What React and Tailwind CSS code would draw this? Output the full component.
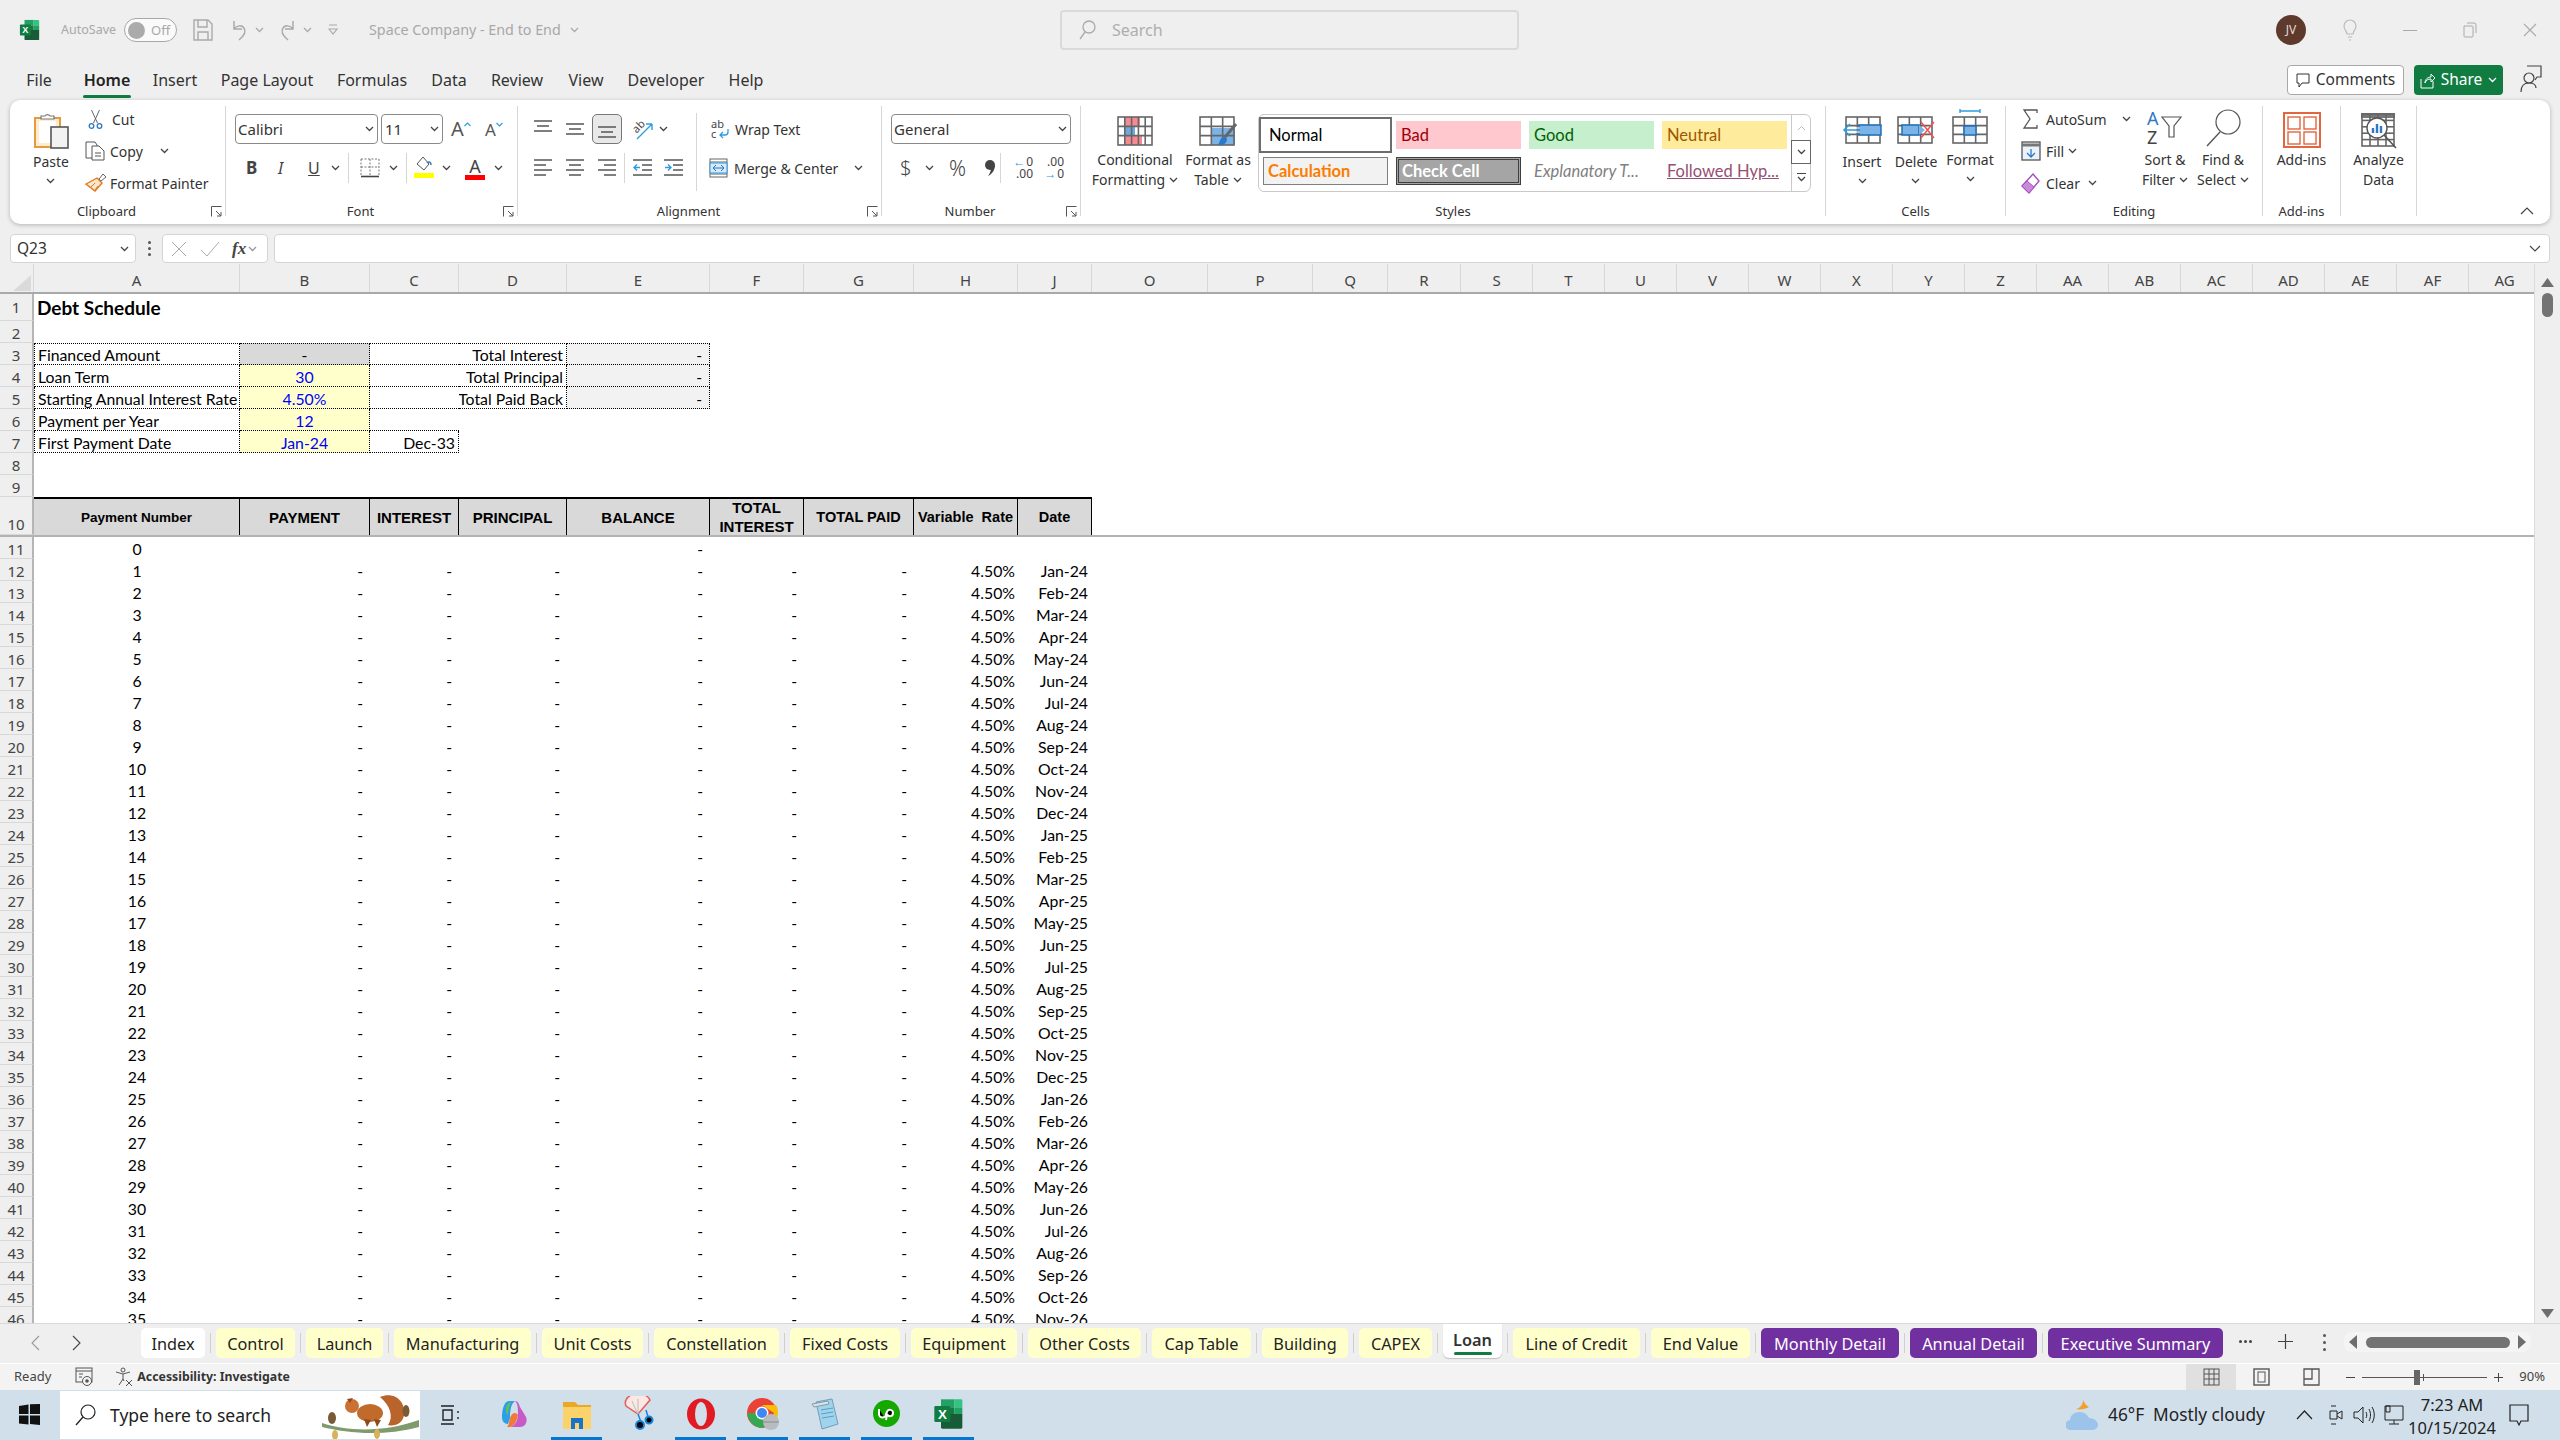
import React from 'react';

const ui = 'font-["Noto_Sans",sans-serif]';
const cellFont = 'font-["Lato",sans-serif]';

const I = ({ w, h, className = '', children }) => (
  <svg width={w} height={h} viewBox={`0 0 ${w} ${h}`} fill="none" className={`shrink-0 overflow-visible ${className}`}>{children}</svg>
);

const Chev = ({ className = '', color = '#444' }) => (
  <I w={9} h={6} className={className}><path d="M1 1l3.5 3.5L8 1" stroke={color} strokeWidth="1.3" /></I>
);

const Sep = ({ className = 'h-[110px] mt-[6px]' }) => <div className={`w-px bg-[#d6d6d6] shrink-0 ${className}`} />;

const Launcher = () => (
  <I w={11} h={11}><path d="M.5 10.5V.5h10M5 5l5 5M10 6v4H6" stroke="#555" /></I>
);

// ribbon group: tool area on top, caption below
const Group = ({ className, label, launcher, children }) => (
  <div className={`flex flex-col shrink-0 mt-[4px] ${className}`}>
    <div className="flex h-[97px]">{children}</div>
    <div className="flex items-center h-[20px]">
      <div className="flex-1 text-center text-[13px] leading-[20px] text-[#333]">{label}</div>
      {launcher && <div className="w-[22px] pl-[8px] pt-[1px] flex justify-start"><Launcher /></div>}
    </div>
  </div>
);

const Big = ({ className, icon, lines, chev, tight }) => (
  <div className={`flex flex-col items-center shrink-0 ${className}`}>
    <div className="h-[46px] flex items-center justify-center">{icon}</div>
    <div className={`text-[14px] leading-[20px] text-[#333] text-center whitespace-nowrap ${tight ? '' : 'mt-[2px]'}`}>
      {lines.map((l, i) => (
        <div key={l} className="flex items-center justify-center gap-[4px]">
          {l}
          {chev === 'inline' && i === lines.length - 1 && <Chev />}
        </div>
      ))}
      {chev === 'below' && <div className="flex justify-center h-[18px] items-center"><Chev /></div>}
    </div>
  </div>
);

const Small = ({ icon, label, after, className = '' }) => (
  <div className={`flex items-center h-[32px] text-[14px] text-[#333] whitespace-nowrap ${className}`}>
    {icon}
    {label}
    {after}
  </div>
);

const SheetGrid = ({ x = 0, y = 0, w = 36, h = 28, c = 3, r = 3 }) => (
  <g stroke="#666" strokeWidth="1.6">
    <rect x={x + 1} y={y + 1} width={w - 2} height={h - 2} />
    {Array.from({ length: c - 1 }, (_, i) => (
      <path key={i} d={`M${x + 1 + ((w - 2) * (i + 1)) / c} ${y + 1}v${h - 2}`} />
    ))}
    {Array.from({ length: r - 1 }, (_, i) => (
      <path key={i} d={`M${x + 1} ${y + 1 + ((h - 2) * (i + 1)) / r}h${w - 2}`} />
    ))}
  </g>
);

const ExcelLogo = ({ s = 22 }) => (
  <svg width={s} height={s} viewBox="0 0 24 24" className="shrink-0">
    <path fill="#21a366" d="M6 1h10v6H6z" />
    <path fill="#33c481" d="M16 1h5a1 1 0 0 1 1 1v5h-6z" />
    <path fill="#107c41" d="M6 7h10v5H6z" />
    <path fill="#21a366" d="M16 7h6v5h-6z" />
    <path fill="#185c37" d="M6 12h16v10a1 1 0 0 1-1 1H7a1 1 0 0 1-1-1z" />
    <rect x="1" y="6" width="12" height="12" rx="1" fill="#107c41" />
    <text x="7" y="15.5" textAnchor="middle" fontSize="10" fontWeight="700" fill="#fff" fontFamily="Liberation Sans">X</text>
  </svg>
);

function TitleBar() {
  return (
    <div className={`flex items-center h-[66px] pb-[6px] shrink-0 text-[#a8a8a8] ${ui}`}>
      <div className="w-[1060px] shrink-0 flex items-center">
        <div className="ml-[19px]"><ExcelLogo /></div>
        <span className="ml-[20px] w-[54px] text-[12.5px] whitespace-nowrap">AutoSave</span>
        <div className="ml-[9px] w-[53px] h-[24px] rounded-full border border-[#a8a8a8] bg-[#fafafa] flex items-center px-[3px] gap-[6px]">
          <div className="w-[17px] h-[17px] rounded-full bg-[#ababab]" />
          <span className="text-[13px] leading-none">Off</span>
        </div>
        <I w={20} h={22} className="ml-[16px]"><path d="M1 1h14l4 4v16H1zM5 1v7h9V1M5 21v-8h10v8" stroke="#aaa" strokeWidth="1.4" /></I>
        <I w={20} h={22} className="ml-[16px]"><path d="M5 2v8h8M5 10c3-4 8-4 10-1s1 7-5 12" stroke="#aaa" strokeWidth="1.5" /></I>
        <Chev className="ml-[6px]" color="#aaa" />
        <I w={20} h={22} className="ml-[14px]"><path d="M15 2v8H7M15 10c-3-4-8-4-10-1s-1 7 5 12" stroke="#aaa" strokeWidth="1.5" /></I>
        <Chev className="ml-[5px]" color="#aaa" />
        <I w={10} h={12} className="ml-[16px]"><path d="M1 1h8M1 5l4 5 4-5z" stroke="#aaa" strokeWidth="1.2" /></I>
        <span className="ml-[31px] w-[193px] text-[14.3px] whitespace-nowrap">Space Company - End to End</span>
        <Chev className="ml-[8px]" color="#aaa" />
      </div>
      <div className="shrink-0 w-[459px] h-[40px] rounded-[4px] border-2 border-[#dadada] flex items-center pl-[16px] gap-[16px]">
        <I w={18} h={20}><circle cx="11" cy="7" r="6" stroke="#aaa" strokeWidth="1.3" /><path d="M7 12l-5 7" stroke="#aaa" strokeWidth="1.3" /></I>
        <span className="text-[16px] text-[#aeaeae]">Search</span>
      </div>
      <div className="ml-[757px] shrink-0 w-[30px] h-[30px] rounded-full bg-[#5e3a2c] flex items-center justify-center text-[12px] text-[#e6dcd6]">JV</div>
      <I w={14} h={22} className="ml-[37px]"><path d="M4 15c0-3-3-4-3-8a6 6 0 0 1 12 0c0 4-3 5-3 8zM5 18h4M6 21h2" stroke="#bbb" strokeWidth="1.2" /></I>
      <div className="ml-[46px] shrink-0 w-[14px] h-px bg-[#aaa]" />
      <I w={14} h={16} className="ml-[46px]"><path d="M1 4h8a1 1 0 0 1 1 1v9a1 1 0 0 1-1 1H2a1 1 0 0 1-1-1zM4 1h7a2 2 0 0 1 2 2v8" stroke="#aaa" /></I>
      <I w={14} h={14} className="ml-[46px]"><path d="M1 1l12 12M13 1L1 13" stroke="#aaa" strokeWidth="1.1" /></I>
    </div>
  );
}

const TABS = [
  ['File', 'w-[66px]'], ['Home', 'w-[70px]'], ['Insert', 'w-[66px]'], ['Page Layout', 'w-[118px]'], ['Formulas', 'w-[92px]'],
  ['Data', 'w-[62px]'], ['Review', 'w-[74px]'], ['View', 'w-[64px]'], ['Developer', 'w-[96px]'], ['Help', 'w-[64px]'],
];

function MenuRow() {
  return (
    <div className={`flex h-[34px] shrink-0 text-[16px] text-[#333] ${ui}`}>
      <div className="flex pl-[6px] mt-[-1px]">
        {TABS.map(([t, w]) => (
          <div key={t} className={`${w} flex flex-col items-center`}>
            <div className={`h-[30px] leading-[30px] whitespace-nowrap ${t === 'Home' ? 'font-semibold text-[#222]' : ''}`}>{t}</div>
            {t === 'Home' && <div className="w-[48px] h-[3px] bg-[#107c41] rounded-full" />}
          </div>
        ))}
      </div>
      <div className="ml-auto flex items-start mt-[-1px]">
        <div className="w-[117px] h-[30px] rounded-[4px] border border-[#a8a8a8] bg-white flex items-center justify-center gap-[6px] text-[15.5px]">
          <I w={14} h={15}><path d="M1 1h12v9H6l-3 4v-4H1z" stroke="#333" /></I>
          Comments
        </div>
        <div className="ml-[10px] w-[89px] h-[30px] rounded-[4px] bg-[#107c41] flex items-center justify-center gap-[6px] text-white text-[15.5px]">
          <I w={15} h={17}><path d="M1 7v9h12V9M5 11c0-4 3-6 6-6V2l4 4-4 4V7c-3 0-5 1-6 4z" stroke="#fff" /></I>
          Share
          <Chev color="#fff" />
        </div>
        <I w={22} h={28} className="ml-[17px] mr-[18px]">
          <circle cx="9" cy="13" r="5" stroke="#444" strokeWidth="1.2" />
          <path d="M1 27c0-6 3-9 8-9s7 2 7 5M7 1h14v11h-4l-2 3" stroke="#444" strokeWidth="1.2" />
        </I>
      </div>
    </div>
  );
}

function AlignIcon({ kind }) {
  const d = {
    top: 'M0 1h18M3 6h12M0 11h18',
    mid: 'M0 4h18M3 9h12M0 14h18',
    bottom: 'M0 7h18M3 12h12M0 17h18',
    left: 'M0 1h18M0 6h12M0 11h18M0 16h12',
    center: 'M0 1h18M3 6h12M0 11h18M3 16h12',
    right: 'M0 1h18M6 6h12M0 11h18M6 16h12',
  }[kind];
  return <I w={18} h={18}><path d={d} stroke="#555" strokeWidth="1.4" /></I>;
}

function Ribbon() {
  return (
    <div className={`flex h-[124px] mx-[10px] shrink-0 rounded-[10px] bg-white shadow-[0_1px_4px_rgba(0,0,0,0.25)] ${ui}`}>
      <Group className="w-[215px]" label="Clipboard" launcher>
        <div className="ml-[10px] w-[62px]">
          <Big className="w-full" chev="below" lines={['Paste']} icon={
            <I w={36} h={38} className="mt-[6px]">
              <rect x="2" y="7" width="25" height="29" fill="#fdeccf" stroke="#e59a3f" strokeWidth="2" />
              <rect x="6" y="10" width="17" height="22" fill="#fff" />
              <path d="M8 8V5h4a3 3 0 0 1 5 0h4v3z" fill="#fff" stroke="#777" strokeWidth="1.2" />
              <rect x="18" y="16" width="17" height="21" fill="#f2f2f2" stroke="#555" strokeWidth="1.6" />
            </I>} />
        </div>
        <div className="ml-[3px] flex flex-col mt-[-1px]">
          <Small label="Cut" className="gap-[9px] pl-[3px]" icon={
            <I w={15} h={20}>
              <path d="M3.500 1l6 13M11.500 1l-6 13" stroke="#666" />
              <circle cx="3.500" cy="17" r="2.300" stroke="#2f78c4" strokeWidth="1.3" />
              <circle cx="11.500" cy="17" r="2.300" stroke="#2f78c4" strokeWidth="1.3" />
            </I>} />
          <Small label="Copy" className="gap-[5px]" after={<Chev className="ml-[12px]" />} icon={
            <I w={20} h={20}>
              <path d="M1 1h9l2 3v13H1z" fill="#fff" stroke="#555" />
              <path d="M7 5h7l5 5v9H7z" fill="#fff" stroke="#555" />
              <path d="M10 12h6M10 15h6" stroke="#555" />
            </I>} />
          <Small label="Format Painter" className="gap-[3px]" icon={
            <I w={22} h={20}>
              <path d="M14 6l4-5 3 3-5 4z" stroke="#666" />
              <path d="M12 5l5 5-7 8L1 11z" fill="#fbe6cd" stroke="#e07b1a" strokeWidth="1.4" />
              <path d="M6 14l4-4M10 17l3-4" stroke="#e07b1a" />
            </I>} />
        </div>
      </Group>
      <Sep />
      <Group className="w-[291px]" label="Font" launcher>
        <div className="flex flex-col">
          <div className="flex items-center h-[40px] pt-[10px] ml-[9px]">
            <div className="w-[143px] h-[30px] rounded-[4px] border border-[#8a8a8a] flex items-center pl-[2px] pr-[3px] text-[15px] text-[#333] justify-between">
              Calibri<Chev />
            </div>
            <div className="ml-[3px] w-[62px] h-[30px] rounded-[4px] border border-[#8a8a8a] flex items-center pl-[3px] pr-[3px] text-[15px] text-[#333] justify-between">
              11<Chev />
            </div>
            <div className="ml-[8px] w-[20px] text-[20px] leading-none text-[#555] flex items-start">A
              <I w={7} h={5} className="mt-[3px]"><path d="M.5 4L3.500 1l3 3" stroke="#2f9be0" strokeWidth="1.2" /></I>
            </div>
            <div className="ml-[14px] w-[18px] text-[17px] leading-none text-[#555] flex items-start">A
              <I w={7} h={5} className="mt-[1px]"><path d="M.5 1l3 3 3-3" stroke="#2f9be0" strokeWidth="1.2" /></I>
            </div>
          </div>
          <div className="flex items-center h-[36px] mt-[6px] ml-[20px] text-[#444]">
            <span className="w-[12px] text-[17px] font-bold">B</span>
            <span className="ml-[20px] w-[10px] text-[16px] italic">I</span>
            <span className="ml-[20px] w-[12px] text-[16px] underline">U</span>
            <Chev className="ml-[11px]" />
            <Sep className="h-[30px] ml-[8px]" />
            <I w={20} h={20} className="ml-[11px]">
              <path d="M1 1h18M1 1v16M19 1v16M10 1v16M1 9h18" stroke="#777" strokeDasharray="2 1.500" />
              <path d="M1 18.500h18" stroke="#444" strokeWidth="1.600" />
            </I>
            <Chev className="ml-[9px]" />
            <Sep className="h-[30px] ml-[8px]" />
            <I w={20} h={24} className="ml-[7px]">
              <path d="M9 1l6 7-5 6-7-6z" fill="#fff" stroke="#555" />
              <path d="M13 7c2-2 4-1 4 2" stroke="#2f78c4" strokeWidth="1.500" />
              <rect x="0" y="17" width="20" height="5" fill="#ffff00" />
            </I>
            <Chev className="ml-[8px]" />
            <div className="ml-[14px] w-[20px] flex flex-col items-center">
              <span className="text-[18px] leading-[18px] text-[#444]">A</span>
              <div className="w-[20px] h-[5px] bg-[#ff0000]" />
            </div>
            <Chev className="ml-[9px]" />
          </div>
        </div>
      </Group>
      <Sep />
      <Group className="w-[363px]" label="Alignment" launcher>
        <div className="flex flex-col ml-[16px]">
          <div className="flex items-center h-[40px] pt-[10px]">
            <AlignIcon kind="top" />
            <div className="ml-[14px]"><AlignIcon kind="mid" /></div>
            <div className="ml-[8px] w-[30px] h-[30px] rounded-[5px] border border-[#777] bg-[#e8e8e8] flex items-center justify-center"><AlignIcon kind="bottom" /></div>
            <I w={22} h={24} className="ml-[9px]">
              <text x="2" y="14" fontSize="11" fill="#444" transform="rotate(-45 7 11)" fontFamily="Noto Sans">ab</text>
              <path d="M6 22L21 7m0 0h-6m6 0v6" stroke="#2f9be0" strokeWidth="1.400" />
            </I>
            <Chev className="ml-[6px]" />
          </div>
          <div className="flex items-center h-[36px] mt-[6px]">
            <AlignIcon kind="left" />
            <div className="ml-[14px]"><AlignIcon kind="center" /></div>
            <div className="ml-[14px]"><AlignIcon kind="right" /></div>
            <Sep className="h-[30px] ml-[8px]" />
            <I w={19} h={18} className="ml-[8px]"><path d="M0 1h19M9 6h10M9 11h10M0 16h19" stroke="#555" strokeWidth="1.400" /><path d="M7 8.500H1m3-3l-3 3 3 3" stroke="#2f9be0" strokeWidth="1.400" /></I>
            <I w={19} h={18} className="ml-[12px]"><path d="M0 1h19M9 6h10M9 11h10M0 16h19" stroke="#555" strokeWidth="1.400" /><path d="M1 8.500h6m-3-3l3 3-3 3" stroke="#2f9be0" strokeWidth="1.400" /></I>
          </div>
        </div>
        <Sep className="h-[78px] mt-[9px] ml-[13px]" />
        <div className="flex flex-col ml-[12px]">
          <div className="flex items-center h-[40px] pt-[10px] text-[14px] text-[#333] gap-[5px] pl-[2px]">
            <I w={19} h={20}>
              <text x="0" y="9" fontSize="11" fill="#444" fontFamily="Noto Sans">ab</text>
              <text x="0" y="19" fontSize="11" fill="#444" fontFamily="Noto Sans">c</text>
              <path d="M17 10v3a3 3 0 0 1-3 3H9m3-3l-3 3 3 3" stroke="#2f9be0" strokeWidth="1.300" />
            </I>
            Wrap Text
          </div>
          <div className="flex items-center h-[36px] mt-[6px] text-[14px] text-[#333] gap-[6px]">
            <I w={19} h={20}>
              <rect x="1" y="1" width="17" height="18" stroke="#666" />
              <path d="M1 4h17M1 16h17" stroke="#666" />
              <rect x="1" y="5" width="17" height="10" fill="#d8e9f7" stroke="#2f9be0" />
              <path d="M4 10h11m-8-3l-3 3 3 3m5-6l3 3-3 3" stroke="#1f78c4" />
            </I>
            Merge &amp; Center
            <Chev className="ml-[10px]" />
          </div>
        </div>
      </Group>
      <Sep />
      <Group className="w-[198px]" label="Number" launcher>
        <div className="flex flex-col ml-[9px]">
          <div className="flex items-center h-[40px] pt-[10px]">
            <div className="w-[180px] h-[30px] rounded-[4px] border border-[#8a8a8a] flex items-center pl-[2px] pr-[3px] text-[15px] text-[#333] justify-between">
              General<Chev />
            </div>
          </div>
          <div className="flex items-center h-[36px] mt-[6px] text-[#444]">
            <span className="ml-[9px] w-[10px] text-[20px] leading-none font-light">$</span>
            <Chev className="ml-[15px]" />
            <span className="ml-[15px] w-[20px] text-[21px] leading-none font-light">%</span>
            <I w={11} h={18} className="ml-[15px]"><circle cx="6" cy="6" r="5" fill="#444" /><path d="M11 6c0 5-3 9-7 11 2-3 3-5 3-8z" fill="#444" /></I>
            <Sep className="h-[30px] ml-[5px]" />
            <div className="ml-[10px] w-[22px] text-[12px] leading-[12px] text-[#444]">
              <div className="flex justify-end"><span className="text-[#2f9be0] mr-[1px]">←</span>0</div>
              <div className="text-right">.00</div>
            </div>
            <div className="ml-[9px] w-[22px] text-[12px] leading-[12px] text-[#444]">
              <div className="text-right">.00</div>
              <div className="flex justify-end"><span className="text-[#2f9be0] mr-[1px]">→</span>0</div>
            </div>
          </div>
        </div>
      </Group>
      <Sep />
      <Group className="w-[744px]" label="Styles">
        <Big className="ml-[15px] w-[78px]" chev="inline" tight lines={['Conditional', 'Formatting']} icon={
          <I w={36} h={30} className="mt-[8px]">
            <rect x="7" y="1" width="16" height="9" fill="#f58a92" />
            <rect x="7" y="10" width="11" height="9" fill="#6fa8dc" />
            <rect x="7" y="19" width="18" height="10" fill="#f58a92" />
            <SheetGrid w={36} h={30} c={5} r={3} />
          </I>} />
        <Big className="ml-[5px] w-[78px]" chev="inline" tight lines={['Format as', 'Table']} icon={
          <I w={38} h={30} className="mt-[8px]">
            <rect x="12" y="12" width="24" height="17" fill="#7cb3e6" />
            <SheetGrid w={36} h={30} c={3} r={3} />
            <path d="M37 8L26 21" stroke="#666" strokeWidth="3" />
            <path d="M26 20c-5 1-5 6-7 9 5 1 9-2 9-6z" fill="#2f78c4" />
          </I>} />
        <div className="ml-px mt-[10px] w-[553px] h-[78px] rounded-[6px] border border-[#c9c9c9] flex">
          <div className={`flex-1 flex flex-col ${cellFont} text-[16.5px]`}>
            <div className="flex items-center mt-[2px] h-[36px]">
              <div className="w-[133px] h-[36px] border-2 border-[#6d6d6d] bg-white flex items-center pl-[8px] text-black">Normal</div>
              <div className="ml-[4px] w-[125px] h-[28px] bg-[#ffc7ce] flex items-center pl-[5px] text-[#9c0006]">Bad</div>
              <div className="ml-[8px] w-[125px] h-[28px] bg-[#c6efce] flex items-center pl-[5px] text-[#006100]">Good</div>
              <div className="ml-[8px] w-[125px] h-[28px] bg-[#ffeb9c] flex items-center pl-[5px] text-[#9c5700]">Neutral</div>
            </div>
            <div className="flex items-center mt-[4px] ml-[4px] h-[28px]">
              <div className="w-[125px] h-[28px] border border-[#7f7f7f] bg-[#f2f2f2] flex items-center pl-[4px] font-bold text-[#fa7d00]">Calculation</div>
              <div className="ml-[8px] w-[125px] h-[28px] border-[3px] border-double border-[#3f3f3f] bg-[#a5a5a5] flex items-center pl-[3px] font-bold text-white">Check Cell</div>
              <div className="ml-[8px] w-[125px] h-[28px] flex items-center pl-[5px] italic text-[#7f7f7f] whitespace-nowrap">Explanatory T...</div>
              <div className="ml-[8px] w-[125px] h-[28px] flex items-center pl-[5px] underline text-[#954f72] whitespace-nowrap">Followed Hyp...</div>
            </div>
          </div>
          <div className="w-[19px] flex flex-col border-l border-[#c9c9c9]">
            <div className="h-[25px] flex items-center justify-center"><I w={9} h={6}><path d="M1 5l3.5-3.5L8 5" stroke="#bbb" /></I></div>
            <div className="h-[24px] border border-[#666] ml-[-1px] mr-[-1px] flex items-center justify-center"><Chev /></div>
            <div className="flex-1 flex flex-col gap-[2px] items-center justify-center"><div className="w-[9px] h-px bg-[#444]" /><Chev /></div>
          </div>
        </div>
      </Group>
      <Sep />
      <Group className="w-[179px]" label="Cells">
        <Big className="ml-[9px] w-[54px]" chev="below" lines={['Insert']} icon={
          <I w={40} h={28} className="mt-[6px]">
            <SheetGrid x={3} w={36} h={28} c={3} r={3} />
            <rect x="17" y="9" width="22" height="10" fill="#7cb3e6" stroke="#1f6fb5" strokeWidth="1.500" />
            <path d="M18 14H2m6-6l-6 6 6 6" stroke="#2f9be0" strokeWidth="1.500" />
            <path d="M18 12H9M18 16H9" stroke="#fff" />
          </I>} />
        <Big className="w-[54px]" chev="below" lines={['Delete']} icon={
          <I w={38} h={28} className="mt-[6px]">
            <SheetGrid w={36} h={28} c={3} r={3} />
            <rect x="5" y="9" width="17" height="10" fill="#7cb3e6" stroke="#1f6fb5" strokeWidth="1.500" />
            <path d="M22 9l6 5-6 5z" fill="#7cb3e6" />
            <path d="M24 6l13 16M37 6L24 22" fill="none" stroke="#ef5350" strokeWidth="1.500" />
          </I>} />
        <Big className="w-[54px]" chev="below" lines={['Format']} tight icon={
          <I w={36} h={36}>
            <path d="M8 2h20M8 0v4M28 0v4" stroke="#2f9be0" strokeWidth="1.400" />
            <SheetGrid y={7} w={36} h={28} c={3} r={3} />
            <rect x="12" y="17" width="12" height="9" fill="#7cb3e6" stroke="#1f6fb5" strokeWidth="1.500" />
          </I>} />
      </Group>
      <Sep />
      <Group className="w-[256px]" label="Editing">
        <div className="flex flex-col ml-[15px] w-[115px] mt-[-1px]">
          <Small label="AutoSum" className="gap-[8px] pl-[2px]" after={<Chev className="ml-[7px]" />} icon={
            <I w={15} h={20}><path d="M14 4V1H1l6 9-6 9h13v-3" stroke="#555" strokeWidth="1.300" /></I>} />
          <Small label="Fill" className="gap-[5px]" after={<Chev className="ml-[-1px]" />} icon={
            <I w={20} h={20}><rect x="1" y="1" width="18" height="18" fill="#eaf3fb" stroke="#555" strokeWidth="1.300" /><path d="M1 4h18" stroke="#777" strokeWidth="3" /><path d="M10 8v8m-4-4l4 4 4-4" stroke="#2f78c4" strokeWidth="1.300" /></I>} />
          <Small label="Clear" className="gap-[6px]" after={<Chev className="ml-[2px]" />} icon={
            <I w={19} h={21}><path d="M12 1l6 7-10 12-7-7z" fill="#fff" stroke="#a64dc0" strokeWidth="1.400" /><path d="M6 8l7 6-5 6-7-7z" fill="#c98bd9" stroke="#a64dc0" /></I>} />
        </div>
        <Big className="w-[58px]" chev="inline" tight lines={['Sort &', 'Filter']} icon={
          <div className="flex text-[18px] leading-[19px] mt-[2px]">
            <div className="flex flex-col w-[14px]"><span className="text-[#2f78c4]">A</span><span className="text-[#444]">Z</span></div>
            <I w={22} h={30} className="mt-[5px]"><path d="M1 3h19l-7 9v11h-5V12z" stroke="#555" strokeWidth="1.200" /></I>
          </div>} />
        <Big className="w-[58px]" chev="inline" tight lines={['Find &', 'Select']} icon={
          <I w={38} h={38} className="mt-[2px]"><circle cx="24" cy="13" r="12" stroke="#555" strokeWidth="1.200" /><path d="M16 23L3 37" stroke="#555" strokeWidth="1.400" /></I>} />
      </Group>
      <Sep />
      <Group className="w-[77px]" label="Add-ins">
        <Big className="w-full" tight lines={['Add-ins']} icon={
          <I w={38} h={36} className="mt-[6px]">
            <rect x="1" y="1" width="36" height="34" stroke="#e2663f" strokeWidth="2" />
            <rect x="5" y="5" width="12" height="12" stroke="#e2663f" strokeWidth="1.400" />
            <rect x="21" y="5" width="12" height="12" stroke="#e2663f" strokeWidth="1.400" />
            <rect x="5" y="20" width="12" height="12" stroke="#e2663f" strokeWidth="1.400" />
            <rect x="21" y="20" width="12" height="12" stroke="#e2663f" strokeWidth="1.400" />
          </I>} />
      </Group>
      <Sep />
      <Group className="w-[75px]" label="">
        <Big className="w-full" tight lines={['Analyze', 'Data']} icon={
          <I w={36} h={36} className="mt-[6px]">
            <rect y="1" width="34" height="5" fill="#777" />
            <SheetGrid y={1} w={34} h={34} c={4} r={5} />
            <circle cx="16" cy="16" r="10" fill="#fff" stroke="#555" strokeWidth="1.400" />
            <path d="M12 21v-5M16 21v-9M20 21v-7" stroke="#2f78c4" strokeWidth="2.400" />
            <path d="M23 23l12 13" stroke="#555" strokeWidth="1.600" />
          </I>} />
      </Group>
      <Sep />
      <div className="flex-1 flex justify-end items-end pb-[9px] pr-[16px]">
        <I w={14} h={8}><path d="M1 7l6-6 6 6" stroke="#444" strokeWidth="1.200" /></I>
      </div>
    </div>
  );
}

function FormulaBar() {
  return (
    <div className={`flex h-[29px] mt-[10px] mb-px mx-[10px] shrink-0 ${ui}`}>
      <div className="w-[126px] rounded-[4px] border border-[#d4d4d4] bg-white flex items-center justify-between pl-[6px] pr-[6px] text-[15.5px] text-[#333]">
        <span className="pt-[1px]">Q23</span><Chev />
      </div>
      <div className="w-[26px] flex flex-col items-center justify-center gap-[3px]">
        <div className="w-[3px] h-[3px] rounded-full bg-[#555]" />
        <div className="w-[3px] h-[3px] rounded-full bg-[#555]" />
        <div className="w-[3px] h-[3px] rounded-full bg-[#555]" />
      </div>
      <div className="w-[106px] rounded-[4px] border border-[#d4d4d4] bg-white flex items-center pl-[8px]">
        <I w={16} h={16}><path d="M1 1l14 14M15 1L1 15" stroke="#aaa" /></I>
        <I w={20} h={16} className="ml-[13px]"><path d="M1 9l6 6L19 1" stroke="#aaa" /></I>
        <span className="ml-[12px] text-[17px] italic font-['Liberation_Serif',serif] font-bold text-[#444]">fx</span>
        <Chev className="ml-[2px]" color="#999" />
      </div>
      <div className="ml-[6px] flex-1 rounded-[4px] border border-[#d4d4d4] bg-white flex items-center justify-end pr-[8px]">
        <I w={12} h={7}><path d="M1 1l5 5 5-5" stroke="#444" strokeWidth="1.100" /></I>
      </div>
    </div>
  );
}

const COLS = [
  ['A', 'w-[206px]'], ['B', 'w-[130px]'], ['C', 'w-[89px]'], ['D', 'w-[108px]'], ['E', 'w-[143px]'], ['F', 'w-[94px]'],
  ['G', 'w-[110px]'], ['H', 'w-[104px]'], ['J', 'w-[74px]'], ['O', 'w-[116px]'], ['P', 'w-[105px]'], ['Q', 'w-[75px]'],
  ['R', 'w-[73px]'], ['S', 'w-[72px]'], ['T', 'w-[72px]'], ['U', 'w-[72px]'], ['V', 'w-[72px]'], ['W', 'w-[72px]'],
  ['X', 'w-[72px]'], ['Y', 'w-[72px]'], ['Z', 'w-[72px]'], ['AA', 'w-[72px]'], ['AB', 'w-[72px]'], ['AC', 'w-[72px]'],
  ['AD', 'w-[72px]'], ['AE', 'w-[72px]'], ['AF', 'w-[72px]'], ['AG', 'w-[72px]'],
];

const RowNum = ({ n, className = 'h-[22px] items-center pt-[2px]' }) => (
  <div className={`w-[34px] shrink-0 flex justify-center bg-[#efefef] border-r-2 border-b border-r-[#b5b5b5] border-b-[#d8d8d8] text-[15px] leading-[20px] text-[#444] ${ui} ${className}`}>{n}</div>
);

const Row = ({ n, children, numClass, className = 'h-[22px]' }) => (
  <div className={`flex shrink-0 ${className}`}>
    <RowNum n={n} className={numClass} />
    {children}
  </div>
);

// one cell of the sheet
const C = ({ w, children, className = '' }) => (
  <div className={`${w} shrink-0 flex items-center whitespace-nowrap overflow-hidden pt-[2px] ${className}`}>{children}</div>
);

const dot = 'border-dotted border-black';
const box = `${dot} border-b border-r`;

const W = Object.fromEntries(COLS.map(([k, w]) => [k, w]));

const MONTHS = ['Jan', 'Feb', 'Mar', 'Apr', 'May', 'Jun', 'Jul', 'Aug', 'Sep', 'Oct', 'Nov', 'Dec'];

const dash = 'justify-end pr-[7px]';

const HEAD = [
  ['A', 'Payment Number', 'text-[13.5px]'], ['B', 'PAYMENT', 'text-[15px]'], ['C', 'INTEREST', 'text-[15px]'],
  ['D', 'PRINCIPAL', 'text-[15px]'], ['E', 'BALANCE', 'text-[15px]'],
  ['F', <span key="f" className="leading-[19px] mt-[-2px]">TOTAL<br />INTEREST</span>, 'text-[15px]'],
  ['G', 'TOTAL PAID', 'text-[14.5px]'], ['H', 'Variable  Rate', 'text-[14.5px] whitespace-pre'], ['J', 'Date', 'text-[14.5px]'],
];

function Sheet() {
  const rows = [];
  for (let i = 0; i <= 35; i++) {
    const n = i + 11;
    const m = (i + 11) % 12;
    const yr = 24 + Math.floor((i - 1) / 12);
    rows.push(
      <Row key={n} n={n}>
        <C w={W.A} className="justify-center">{i}</C>
        <C w={W.B} className={dash}>{i > 0 && '-'}</C>
        <C w={W.C} className={dash}>{i > 0 && '-'}</C>
        <C w={W.D} className={dash}>{i > 0 && '-'}</C>
        <C w={W.E} className={dash}>-</C>
        <C w={W.F} className={dash}>{i > 0 && '-'}</C>
        <C w={W.G} className={dash}>{i > 0 && '-'}</C>
        <C w={W.H} className="justify-end pr-[3px]">{i > 0 && '4.50%'}</C>
        <C w={W.J} className="justify-end pr-[4px]">{i > 0 && `${MONTHS[m]}-${yr}`}</C>
      </Row>
    );
  }
  return (
    <div className="flex h-[1059px] shrink-0">
      <div className="w-[2534px] bg-white overflow-hidden flex flex-col">
        <div className={`flex h-[30px] shrink-0 bg-[#efefef] border-b-2 border-[#a9a9a9] text-[15px] text-[#444] ${ui}`}>
          <div className="w-[34px] shrink-0 flex items-end justify-end pr-[2px] pb-[1px] border-r border-[#d8d8d8]">
            <I w={18} h={16}><path d="M18 0v16H0z" fill="#dadada" /></I>
          </div>
          {COLS.map(([k, w]) => (
            <div key={k} className={`${w} shrink-0 flex items-center justify-center pt-[5px] border-r border-[#d8d8d8]`}>{k}</div>
          ))}
        </div>
        <div className={`flex flex-col ${cellFont} text-[15.8px] text-black`}>
          <Row n={1} className="h-[27px]" numClass="h-[27px] items-center">
            <C w={W.A} className="pl-[3px] text-[19px] font-bold">Debt Schedule</C>
          </Row>
          <Row n={2} />
          <Row n={3}>
            <C w={W.A} className={`${box} border-t border-l pl-[3px]`}>Financed Amount</C>
            <C w={W.B} className={`${box} border-t bg-[#d9d9d9] justify-center`}>-</C>
            <C w={W.C} className={`${dot} border-t border-b`} />
            <C w={W.D} className={`${box} border-t justify-end pr-[3px]`}>Total Interest</C>
            <C w={W.E} className={`${box} border-t bg-[#f2f2f2] ${dash}`}>-</C>
          </Row>
          <Row n={4}>
            <C w={W.A} className={`${box} border-l pl-[3px]`}>Loan Term</C>
            <C w={W.B} className={`${box} bg-[#ffffcc] justify-center text-[#0000ff]`}>30</C>
            <C w={W.C} className={`${dot} border-b`} />
            <C w={W.D} className={`${box} justify-end pr-[3px]`}>Total Principal</C>
            <C w={W.E} className={`${box} bg-[#f2f2f2] ${dash}`}>-</C>
          </Row>
          <Row n={5}>
            <C w={W.A} className={`${box} border-l pl-[3px]`}>Starting Annual Interest Rate</C>
            <C w={W.B} className={`${box} bg-[#ffffcc] justify-center text-[#0000ff]`}>4.50%</C>
            <C w={W.C} className={`${dot} border-b`} />
            <C w={W.D} className={`${box} justify-end pr-[3px]`}>Total Paid Back</C>
            <C w={W.E} className={`${box} bg-[#f2f2f2] ${dash}`}>-</C>
          </Row>
          <Row n={6}>
            <C w={W.A} className={`${box} border-l pl-[3px]`}>Payment per Year</C>
            <C w={W.B} className={`${box} bg-[#ffffcc] justify-center text-[#0000ff]`}>12</C>
            <C w={W.C} className={`${dot} border-b`} />
          </Row>
          <Row n={7}>
            <C w={W.A} className={`${box} border-l pl-[3px]`}>First Payment Date</C>
            <C w={W.B} className={`${box} bg-[#ffffcc] justify-center text-[#0000ff]`}>Jan-24</C>
            <C w={W.C} className={`${box} justify-end pr-[3px]`}>Dec-33</C>
          </Row>
          <Row n={8} />
          <Row n={9} />
          <div className="flex h-[40px] shrink-0 border-b-2 border-[#b3b3b3]">
            <RowNum n={10} className="h-[38px] items-end" />
            <div className="flex h-[38px] border-t-2 border-black font-['Liberation_Sans',sans-serif] font-bold">
              {HEAD.map(([k, t, cls]) => (
                <C key={k} w={W[k]} className={`bg-[#d9d9d9] border-r border-black text-center justify-center ${cls}`}>{t}</C>
              ))}
            </div>
          </div>
          {rows}
        </div>
      </div>
      <div className="flex-1 flex flex-col items-center bg-[#efefef] border-l border-[#dcdcdc]">
        <I w={13} h={9} className="mt-[14px]"><path d="M6.5 0L13 9H0z" fill="#6e6e6e" /></I>
        <div className="w-[11px] h-[24px] mt-[6px] rounded-full bg-[#737373]" />
        <I w={13} h={9} className="mt-auto mb-[5px]"><path d="M6.5 9L13 0H0z" fill="#6e6e6e" /></I>
      </div>
    </div>
  );
}

const SHEETS = [
  ['Index', 'w-[64px] bg-white'], ['Control', 'w-[79px] bg-[#ffffcc]'], ['Launch', 'w-[77px] bg-[#ffffcc]'],
  ['Manufacturing', 'w-[137px] bg-[#ffffcc]'], ['Unit Costs', 'w-[101px] bg-[#ffffcc]'], ['Constellation', 'w-[125px] bg-[#ffffcc]'],
  ['Fixed Costs', 'w-[110px] bg-[#ffffcc]'], ['Equipment', 'w-[106px] bg-[#ffffcc]'], ['Other Costs', 'w-[113px] bg-[#ffffcc]'],
  ['Cap Table', 'w-[99px] bg-[#ffffcc]'], ['Building', 'w-[86px] bg-[#ffffcc]'], ['CAPEX', 'w-[73px] bg-[#ffffcc]'],
  ['Loan', 'w-[59px]'], ['Line of Credit', 'w-[127px] bg-[#ffffcc]'], ['End Value', 'w-[99px] bg-[#ffffcc]'],
  ['Monthly Detail', 'w-[138px] bg-[#7030a0] text-white'], ['Annual Detail', 'w-[127px] bg-[#7030a0] text-white'],
  ['Executive Summary', 'w-[175px] bg-[#7030a0] text-white'],
];

function SheetTabs() {
  return (
    <div className={`flex items-start h-[40px] shrink-0 bg-[#efefef] border-t border-[#d9d9d9] text-[16.3px] text-[#222] ${ui}`}>
      <I w={9} h={16} className="ml-[31px] mt-[11px]"><path d="M8 1L1 8l7 7" stroke="#999" strokeWidth="1.100" /></I>
      <I w={9} h={16} className="ml-[32px] mt-[11px]"><path d="M1 1l7 7-7 7" stroke="#444" strokeWidth="1.100" /></I>
      <div className="flex ml-[60px] mt-[4px] shrink-0">
        {SHEETS.map(([t, cls], i) => (
          <React.Fragment key={t}>
            {i > 0 && <div className="w-px h-[20px] mt-[5px] mx-[5px] bg-[#cfcfcf]" />}
            {t === 'Loan' ? (
              <div className={`${cls} h-[34px] mt-[-4px] bg-white rounded-b-[6px] shadow-[0_1px_1px_rgba(0,0,0,0.2)] flex flex-col items-center`}>
                <span className="h-[26px] leading-[28px] mt-[2px] font-semibold text-[#333]">{t}</span>
                <div className="w-[38px] h-[3px] bg-[#107c41] rounded-full" />
              </div>
            ) : (
              <div className={`${cls} h-[30px] pt-[2px] rounded-[5px] flex items-center justify-center whitespace-nowrap`}>{t}</div>
            )}
          </React.Fragment>
        ))}
      </div>
      <div className="ml-[16px] mt-[16px] flex gap-[2px]">
        <div className="w-[3px] h-[3px] rounded-full bg-[#444]" /><div className="w-[3px] h-[3px] rounded-full bg-[#444]" /><div className="w-[3px] h-[3px] rounded-full bg-[#444]" />
      </div>
      <I w={15} h={15} className="ml-[26px] mt-[10px]"><path d="M7.5 0v15M0 7.5h15" stroke="#444" strokeWidth="1.200" /></I>
      <div className="ml-[30px] mt-[10px] flex flex-col gap-[4px]">
        <div className="w-[3px] h-[3px] rounded-full bg-[#555]" /><div className="w-[3px] h-[3px] rounded-full bg-[#555]" /><div className="w-[3px] h-[3px] rounded-full bg-[#555]" />
      </div>
      <div className="ml-[18px] mt-[8px] w-[187px] h-[20px] rounded-[8px] bg-[#f4f4f4] flex items-center justify-between px-[5px]">
        <I w={8} h={14}><path d="M8 0v14L0 7z" fill="#6e6e6e" /></I>
        <div className="w-[144px] h-[11px] rounded-full bg-[#737373]" />
        <I w={8} h={14}><path d="M0 0v14l8-7z" fill="#6e6e6e" /></I>
      </div>
    </div>
  );
}

function StatusBar() {
  return (
    <div className={`flex items-center h-[27px] shrink-0 bg-[#f3f3f3] border-t border-white text-[#444] ${ui}`}>
      <span className="ml-[14px] text-[13px]">Ready</span>
      <I w={18} h={20} className="ml-[24px]">
        <rect x="1" y="1" width="16" height="14" stroke="#555" /><path d="M1 4h16M4 7h4M4 10h3" stroke="#555" />
        <circle cx="12" cy="14" r="4.500" fill="#f3f3f3" stroke="#555" /><circle cx="12" cy="14" r="1.800" fill="#555" />
      </I>
      <I w={18} h={20} className="ml-[22px]">
        <circle cx="8" cy="3" r="2" stroke="#555" /><path d="M1 5l7 2 7-2M8 7v5l-4 6M8 12l1 2" stroke="#555" /><path d="M11 13l6 6M17 13l-6 6" stroke="#555" />
      </I>
      <span className="ml-[4px] text-[12.3px] font-bold whitespace-nowrap text-[#333]">Accessibility: Investigate</span>
      <div className="ml-auto w-[50px] h-[26px] bg-[#e0e0e0] flex items-center justify-center">
        <I w={17} h={18}><rect x="1" y="1" width="15" height="16" stroke="#555" /><path d="M6 1v16M11 1v16M1 6h15M1 11h15" stroke="#555" /></I>
      </div>
      <div className="w-[50px] flex justify-center">
        <I w={17} h={18}><rect x="1" y="1" width="15" height="16" stroke="#555" strokeWidth="1.400" /><rect x="5" y="4" width="7" height="10" stroke="#555" /></I>
      </div>
      <div className="w-[50px] flex justify-center">
        <I w={17} h={18}><path d="M1 1h15v16H1zM1 11h8V1" stroke="#555" strokeWidth="1.300" /></I>
      </div>
      <div className="ml-[10px] w-[9px] h-px bg-[#444]" />
      <div className="ml-[7px] w-[125px] h-px bg-[#555] relative">
        <div className="absolute left-[52px] top-[-7px] w-[6px] h-[15px] bg-[#666]" />
        <div className="absolute left-[61px] top-[-3px] w-px h-[7px] bg-[#555]" />
      </div>
      <I w={9} h={9} className="ml-[7px]"><path d="M4.5 0v9M0 4.5h9" stroke="#444" /></I>
      <span className="ml-[16px] mr-[15px] text-[13px]">90%</span>
    </div>
  );
}

const TaskApp = ({ active, children }) => (
  <div className="w-[51px] h-[50px] ml-[11px] shrink-0 flex flex-col items-center">
    <div className="h-[47px] flex items-center justify-center">{children}</div>
    <div className={`w-full h-[3px] ${active ? 'bg-[#0078d4]' : ''}`} />
  </div>
);

function Taskbar() {
  return (
    <div className={`flex h-[50px] shrink-0 bg-[#d1dfeb] text-[#222] ${ui}`}>
      <I w={21} h={21} className="ml-[19px] mt-[14px]">
        <path d="M0 2l9.500-1.500V10H0zM11 .3L21 0v10H11zM0 11.500h9.500v9L0 19.500zM11 11.500h10V21l-10-1z" fill="#111" />
      </I>
      <div className="ml-[20px] w-[360px] h-[48px] mt-[1px] bg-white flex items-center pl-[15px] overflow-hidden">
        <I w={21} h={22}><circle cx="13" cy="8" r="7" stroke="#222" strokeWidth="1.200" /><path d="M8 13l-7 8" stroke="#222" strokeWidth="1.400" /></I>
        <span className="ml-[14px] text-[17.5px] whitespace-nowrap">Type here to search</span>
        <svg width="98" height="48" viewBox="0 0 98 48" className="ml-auto shrink-0">
          <path d="M0 32c25 8 60 10 97-3v7C60 46 25 42 0 36z" fill="#7f9a6c" />
          <path d="M58 6c14-6 26 4 24 18-1 8-9 12-16 10 6-8 2-20-8-28z" fill="#b9642a" />
          <ellipse cx="48" cy="22" rx="13" ry="9" fill="#c06a2c" />
          <circle cx="30" cy="15" r="7" fill="#c97234" />
          <path d="M25 8l3 4 3-5zM42 28l3 8 4-7zM52 28l3 8 4-7z" fill="#8f4a1c" />
          <ellipse cx="10" cy="27" rx="4" ry="6" fill="#7a5a34" />
          <ellipse cx="84" cy="20" rx="3.500" ry="6" fill="#7a5a34" />
          <ellipse cx="55" cy="43" rx="3" ry="5" fill="#d8b25a" />
          <ellipse cx="13" cy="44" rx="3" ry="5" fill="#d8b25a" />
        </svg>
      </div>
      <div className="ml-[20px] w-[21px] flex items-center">
        <I w={21} h={20}><path d="M1 1h13M1 19h13M3 5h9v10H3zM18 6v2M18 12v2" stroke="#222" strokeWidth="1.400" /></I>
      </div>
      <div className="ml-[17px] flex">
        <TaskApp>
          <svg width="28" height="30" viewBox="0 0 28 30">
            <path d="M8 2h6c-4 3-5 9-5 17l-2 6c-4 0-6-3-6-7 0-7 2-16 7-16z" fill="#2aa0e8" />
            <path d="M14 2c3 0 4 3 5 6l6 10c2 5-1 10-6 10h-9c5-2 7-8 7-13 0-5 0-10-3-13z" fill="#c85ac8" />
            <path d="M9 19c2-6 6-6 8-3-1 5-3 10-7 12H6c2-2 2-5 3-9z" fill="#f2793b" />
            <path d="M5 10c0-4 3-6 5-7-2 4-3 8-3 13-2-1-2-4-2-6z" fill="#6ec04a" />
          </svg>
        </TaskApp>
        <TaskApp active>
          <svg width="28" height="30" viewBox="0 0 28 30">
            <path d="M0 3h12l3 3h13v24H0z" fill="#e9a825" />
            <path d="M0 8h28v22H0z" fill="#fcd36a" />
            <path d="M8 30V19h12v11h-4v-6h-4v6z" fill="#1a73c7" />
          </svg>
        </TaskApp>
        <TaskApp>
          <svg width="33" height="36" viewBox="0 0 33 36">
            <path d="M4 10a12 9 0 0 1 24-6L16 18z" fill="#fbe7e4" stroke="#e06060" strokeWidth="1.500" />
            <path d="M10 5l6 14M16 3v15" stroke="#bbb" />
            <circle cx="18" cy="29" r="4" stroke="#1a84d8" strokeWidth="2" />
            <circle cx="27" cy="24" r="3.500" stroke="#1a84d8" strokeWidth="2" />
            <path d="M16 18l3 8M24 14l2 7" stroke="#1a84d8" strokeWidth="1.500" />
          </svg>
        </TaskApp>
        <TaskApp active>
          <svg width="30" height="32" viewBox="0 0 30 32">
            <ellipse cx="15" cy="16" rx="14" ry="15.500" fill="#e01b24" />
            <ellipse cx="15" cy="16" rx="6" ry="12" fill="#d1dfeb" />
          </svg>
        </TaskApp>
        <TaskApp active>
          <svg width="34" height="34" viewBox="0 0 34 34">
            <circle cx="16" cy="16" r="15" fill="#ea4335" />
            <path d="M1.500 16A15 15 0 0 0 17 31l7-11-8-4z" fill="#34a853" />
            <path d="M16 8h14a15 15 0 0 1-9 22l7-14z" fill="#fbbc05" />
            <circle cx="16" cy="16" r="6.500" fill="#fff" /><circle cx="16" cy="16" r="5" fill="#4285f4" />
            <circle cx="25" cy="25" r="8" fill="#b8bcbe" /><path d="M17 25h16" stroke="#8a8d8f" />
          </svg>
        </TaskApp>
        <TaskApp active>
          <svg width="28" height="32" viewBox="0 0 28 32">
            <path d="M5 4l16-3 6 25-16 5z" fill="#9fd4ec" stroke="#6f9fb5" />
            <path d="M1 6l16-3 1 3L3 9z" fill="#d4e4ea" stroke="#8899a0" />
            <path d="M10 12l12-2M10 16l12-2M11 20l12-2" stroke="#5b9ec4" />
          </svg>
        </TaskApp>
        <TaskApp active>
          <svg width="27" height="27" viewBox="0 0 27 27">
            <circle cx="13.500" cy="13.500" r="13.500" fill="#14a800" />
            <path d="M6 9v5a3.500 3.500 0 0 0 7 0l1-2c1-3 6-3 6 1s-5 4-6 1l-1 6" stroke="#fff" strokeWidth="2" />
          </svg>
        </TaskApp>
        <TaskApp active><ExcelLogo s={32} /></TaskApp>
      </div>
      <div className="ml-auto flex items-center shrink-0">
        <svg width="33" height="32" viewBox="0 0 33 32" className="shrink-0">
          <path d="M17 1c2 4 4 6 6 7-3 2-9 3-13 2 4-1 7-4 7-9z" fill="#f2a02c" />
          <path d="M5 31a5 5 0 0 1-1-10c0-5 5-8 9-8 5 0 8 2 10 6 6 0 9 4 9 7s-3 5-6 5z" fill="#9cc3ea" />
        </svg>
        <span className="ml-[9px] w-[156px] text-[17.3px] whitespace-pre">46°F  Mostly cloudy</span>
        <I w={17} h={10} className="ml-[32px]"><path d="M1 9l7.500-8L16 9" stroke="#222" strokeWidth="1.200" /></I>
        <I w={15} h={24} className="ml-[15px]"><path d="M2 8h7v8H2zM9 11l5-3v8l-5-3M3 3h5M3 21h5" stroke="#222" /></I>
        <I w={22} h={20} className="ml-[10px]"><path d="M1 7h4l5-5v16l-5-5H1zM13 7c1 2 1 4 0 6M16 4c2 4 2 8 0 12M19 2c3 5 3 11 0 16" stroke="#222" /></I>
        <I w={20} h={22} className="ml-[9px]"><path d="M4 2h15v14H1V2h3M10 16v4M5 20h10M2 2h4v6H2z" stroke="#222" /></I>
        <div className="w-[96px] text-center text-[16.5px] leading-[23px] mt-[1px] whitespace-nowrap">
          <div>7:23 AM</div>
          <div>10/15/2024</div>
        </div>
        <I w={20} h={22} className="ml-[9px] mr-[31px]"><path d="M1 1h18v16h-7l-2 4-2-4H1z" stroke="#222" strokeWidth="1.200" /></I>
      </div>
    </div>
  );
}

export default function App() {
  return (
    <div className="w-[2560px] h-[1440px] flex flex-col overflow-hidden bg-[#efefef]">
      <TitleBar />
      <MenuRow />
      <Ribbon />
      <FormulaBar />
      <Sheet />
      <SheetTabs />
      <StatusBar />
      <Taskbar />
    </div>
  );
}
